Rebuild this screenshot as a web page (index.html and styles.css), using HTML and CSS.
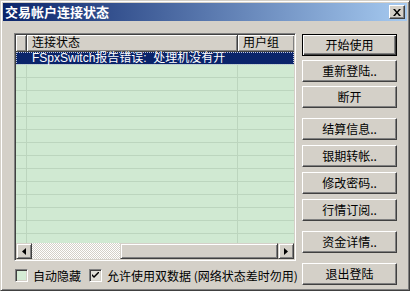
FILE: index.html
```html
<!DOCTYPE html>
<html lang="zh-CN">
<head>
  <meta charset="UTF-8">
  <title>交易帐户连接状态</title>
  <link rel="stylesheet" href="styles.css">
</head>
<body>
  <div class="window">
    <div class="titlebar">
      <span class="title">交易帐户连接状态</span>
      <span class="close">
        <svg width="8" height="7" viewBox="0 0 8 7"><path d="M0 0h2l2 2.5 2-2.5h2l-3 3.5 3 3.5h-2l-2-2.5-2 2.5h-2l3-3.5z" fill="#000"/></svg>
      </span>
    </div>

    <div class="content">
      <div class="left">
        <div class="list">
          <div class="list-head">
            <div class="head-cell c0"></div>
            <div class="head-cell c1">连接状态</div>
            <div class="head-cell c2">用户组</div>
          </div>
          <div class="list-body">
            <div class="row selected">
              <div class="cell c0"></div>
              <div class="cell c1">FSpxSwitch报告错误:&nbsp; 处理机没有开</div>
              <div class="cell c2"></div>
            </div>
            <div class="row"></div>
            <div class="row"></div>
            <div class="row"></div>
            <div class="row"></div>
            <div class="row"></div>
            <div class="row"></div>
            <div class="row"></div>
            <div class="row"></div>
            <div class="row"></div>
            <div class="row"></div>
            <div class="row"></div>
            <div class="row"></div>
            <div class="row"></div>
          </div>
          <div class="hscroll">
            <span class="arrow">
              <svg width="4" height="7" viewBox="0 0 4 7"><path d="M4 0v7L0 3.5z" fill="#000"/></svg>
            </span>
            <span class="track"></span>
            <span class="thumb"></span>
            <span class="arrow">
              <svg width="4" height="7" viewBox="0 0 4 7"><path d="M0 0v7l4-3.5z" fill="#000"/></svg>
            </span>
          </div>
        </div>

        <div class="options">
          <label class="check"><span class="box"></span>自动隐藏</label>
          <label class="check"><span class="box checked">
            <svg width="7" height="7" viewBox="0 0 7 7"><path d="M0 2l2 2 5-5v2l-5 5-2-2z" fill="#000"/></svg>
          </span>允许使用双数据 (网络状态差时勿用)</label>
        </div>
      </div>

      <div class="buttons">
        <div class="group g4">
          <button class="btn default">开始使用</button>
          <button class="btn">重新登陆..</button>
          <button class="btn">断开</button>
        </div>
        <div class="group g5">
          <button class="btn">结算信息..</button>
          <button class="btn">银期转帐..</button>
          <button class="btn">修改密码..</button>
          <button class="btn">行情订阅..</button>
        </div>
        <button class="btn">资金详情..</button>
        <button class="btn">退出登陆</button>
      </div>
    </div>
  </div>
</body>
</html>
```

FILE: styles.css
```css
body {
  margin: 0;
  font-family: "Noto Sans CJK SC", sans-serif;
  font-size: 12px;
  color: #000;
  background-color: #d4d0c8;
}
.window {
  width: 410px;
  height: 291px;
  box-sizing: border-box;
  padding: 2px;
  background-color: #d4d0c8;
  border: 1px solid;
  border-color: #d4d0c8 #404040 #404040 #d4d0c8;
  box-shadow: inset 1px 1px #fff, inset -1px -1px #808080;
}
.titlebar {
  height: 18px;
  display: flex;
  align-items: center;
  justify-content: space-between;
  padding: 0 2px 0 2px;
  background: linear-gradient(to right, #0a246a, #a6caf0);
}
.title {
  color: #fff;
  font-weight: bold;
  font-size: 13px;
  line-height: 18px;
}
.close {
  width: 16px;
  height: 14px;
  box-sizing: border-box;
  display: flex;
  align-items: center;
  justify-content: center;
  background-color: #d4d0c8;
  border: 1px solid;
  border-color: #fff #404040 #404040 #fff;
  box-shadow: inset -1px -1px #808080;
}
.content {
  display: flex;
  gap: 6px;
  padding: 12px 10px 0 11px;
}
.left {
  width: 282px;
}
.list {
  height: 228px;
  box-sizing: border-box;
  display: flex;
  flex-direction: column;
  border: 1px solid;
  border-color: #808080 #fff #fff #808080;
  box-shadow: inset 1px 1px #404040, inset -1px -1px #d4d0c8;
  padding: 1px;
  background-color: #d0e9d2;
  font-family: "Liberation Sans", "Noto Sans CJK SC", sans-serif;
}
.list-head {
  display: flex;
  height: 17px;
  flex: none;
}
.head-cell {
  box-sizing: border-box;
  height: 17px;
  line-height: 16px;
  padding-left: 5px;
  background-color: #d4d0c8;
  border-right: 1px solid #404040;
  border-bottom: 1px solid #404040;
  box-shadow: inset 1px 1px #fff, inset -1px -1px #808080;
  white-space: nowrap;
}
.c0 {
  width: 11px;
  flex: none;
  padding-left: 0;
}
.c1 {
  width: 211px;
  flex: none;
}
.c2 {
  flex: 1;
  border-right: none;
}
/* column lines run down the whole body, rows only draw the horizontal ones */
.list-body {
  flex: 1;
  background: linear-gradient(to right,
    transparent 10px, #bcd5be 10px 11px,
    transparent 11px 221px, #bcd5be 221px 222px,
    transparent 222px);
}
.row {
  display: flex;
  height: 13px;
  box-sizing: border-box;
  border-bottom: 1px solid #bcd5be;
}
.cell {
  box-sizing: border-box;
  line-height: 12px;
  padding-left: 5px;
  white-space: nowrap;
}
.cell.c0 {
  padding-left: 0;
}
.row.selected {
  background-color: #0a246a;
  color: #fff;
  outline: 1px dotted #c0c8e0;
  outline-offset: -1px;
}
.hscroll {
  height: 16px;
  flex: none;
  display: flex;
}
.arrow {
  width: 16px;
  height: 16px;
  box-sizing: border-box;
  display: flex;
  align-items: center;
  justify-content: center;
  background-color: #d4d0c8;
  border: 1px solid;
  border-color: #d4d0c8 #404040 #404040 #d4d0c8;
  box-shadow: inset 1px 1px #fff, inset -1px -1px #808080;
}
.track {
  width: 88px;
  background: repeating-conic-gradient(#d4d0c8 0 25%, #fff 0 50%) 0 0 / 2px 2px;
}
.thumb {
  flex: 1;
  box-sizing: border-box;
  background-color: #d4d0c8;
  border: 1px solid;
  border-color: #d4d0c8 #404040 #404040 #d4d0c8;
  box-shadow: inset 1px 1px #fff, inset -1px -1px #808080;
}
.options {
  display: flex;
  align-items: center;
  gap: 8px;
  margin-top: 8px;
  padding-left: 1px;
}
.check {
  display: flex;
  align-items: center;
  gap: 5px;
  line-height: 13px;
  white-space: nowrap;
}
.box {
  width: 13px;
  height: 13px;
  box-sizing: border-box;
  display: flex;
  align-items: center;
  justify-content: center;
  background-color: #d5ecd5;
  border: 1px solid;
  border-color: #808080 #fff #fff #808080;
  box-shadow: inset 1px 1px #404040, inset -1px -1px #d4d0c8;
}
.box.checked {
  background-color: #e0e0d8;
}
.buttons {
  width: 95px;
  display: flex;
  flex-direction: column;
  gap: 10px;
  padding-top: 1px;
}
.group {
  display: flex;
  flex-direction: column;
}
.g4 {
  gap: 4px;
}
.g5 {
  gap: 5px;
}
.btn {
  height: 22px;
  width: 95px;
  padding: 0;
  font-family: "Noto Sans CJK SC", sans-serif;
  font-size: 12px;
  line-height: 20px;
  color: #000;
  background-color: #d4d0c8;
  border: 1px solid;
  border-color: #fff #404040 #404040 #fff;
  box-shadow: inset -1px -1px #808080;
}
.btn.default {
  border-color: #000;
  box-shadow: inset 1px 1px #fff, inset -1px -1px #404040, inset -2px -2px #808080;
}
```
